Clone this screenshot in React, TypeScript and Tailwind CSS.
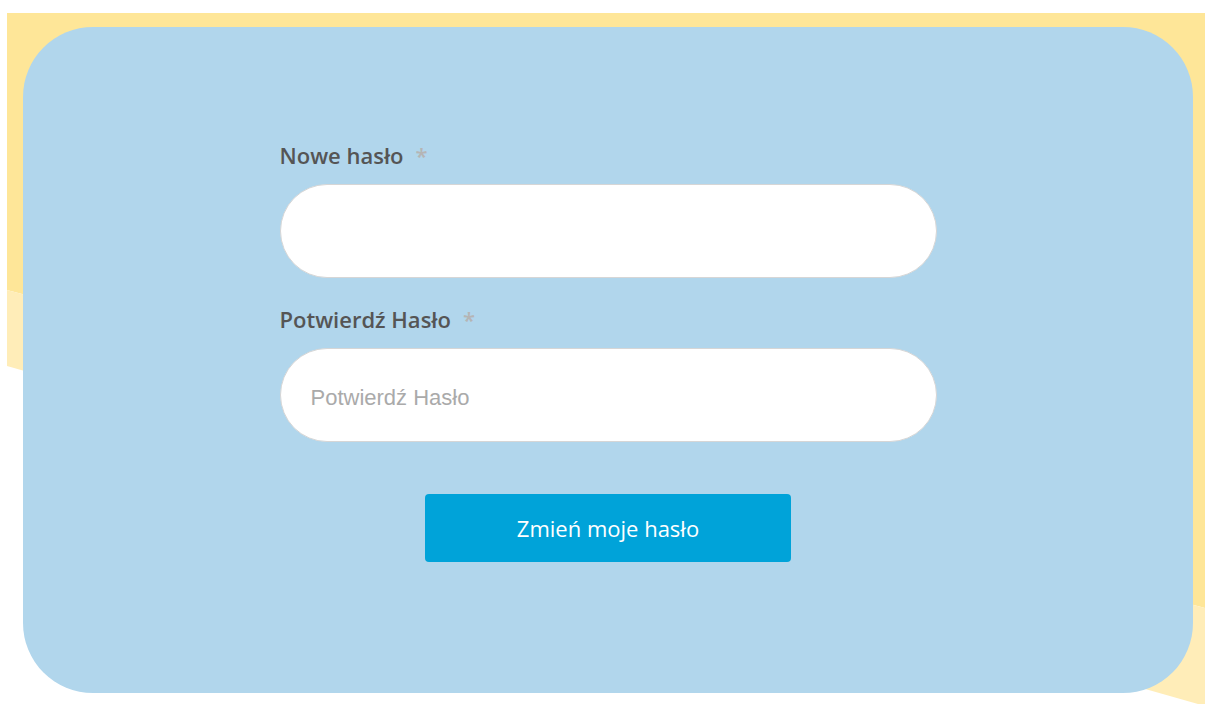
import { useState } from "react";

// Tło z żółtymi pasami pod kartą formularza
const Backdrop = () => (
  <svg
    className="absolute inset-0"
    width="1205"
    height="704"
    viewBox="0 0 1205 704"
  >
    <polygon points="7,13 1205,13 1205,608 7,290" fill="#fee698" />
    <polygon points="7,290 1205,608 1205,706 7,366" fill="#ffedb8" />
  </svg>
);

interface FieldProps {
  label: string;
  value: string;
  placeholder?: string;
  onChange: (value: string) => void;
}

const Field = ({ label, value, placeholder, onChange }: FieldProps) => (
  <label className="flex flex-col">
    <span className="h-[28px] leading-[28px] text-[22px] font-semibold text-[#555555] font-['Open_Sans',sans-serif]">
      {label}
      <span className="ml-[12px] text-[#b5b5b5]">*</span>
    </span>
    <input
      type="password"
      value={value}
      placeholder={placeholder}
      onChange={(e) => onChange(e.target.value)}
      className="mt-[15px] h-[94px] w-full rounded-full border border-[#d6d6d6] bg-white pl-[30px] pr-[30px] pt-[6px] text-[22px] text-[#555] placeholder:text-[#aaaaaa] outline-none font-['Liberation_Sans',Arial,sans-serif]"
    />
  </label>
);

export default function App() {
  const [password, setPassword] = useState("");
  const [confirm, setConfirm] = useState("");

  return (
    <div className="relative h-[704px] w-[1205px] overflow-hidden bg-white">
      <Backdrop />
      <div className="relative ml-[23px] mt-[27px] flex h-[666px] w-[1170px] flex-col items-center rounded-[70px] bg-[#b1d6ec] pt-[114px]">
        <form
          className="flex w-[657px] flex-col"
          onSubmit={(e) => e.preventDefault()}
        >
          <Field label="Nowe hasło" value={password} onChange={setPassword} />
          <div className="mt-[27px]">
            <Field
              label="Potwierdź Hasło"
              value={confirm}
              placeholder="Potwierdź Hasło"
              onChange={setConfirm}
            />
          </div>
          <button
            type="submit"
            className="mx-auto mt-[52px] h-[68px] w-[366px] rounded-[4px] bg-[#00a3d9] text-[22px] text-white font-['Open_Sans',sans-serif]"
          >
            Zmień moje hasło
          </button>
        </form>
      </div>
    </div>
  );
}
